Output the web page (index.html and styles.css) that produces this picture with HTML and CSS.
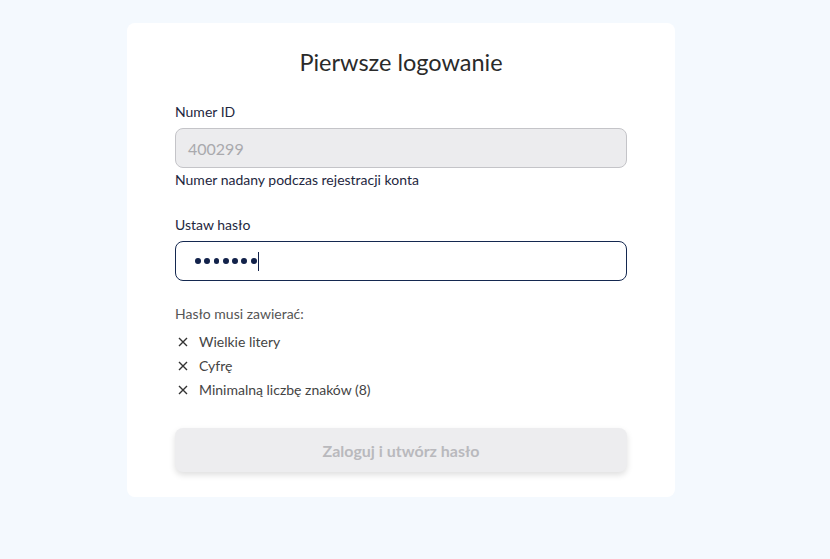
FILE: index.html
```html
<!DOCTYPE html>
<html lang="pl">
<head>
<meta charset="utf-8">
<title>Pierwsze logowanie</title>
<link rel="stylesheet" href="styles.css">
</head>
<body>
<main class="card">
  <h1 class="title">Pierwsze logowanie</h1>
  <div class="field">
    <label class="label">Numer ID</label>
    <div class="input input-disabled">400299</div>
    <div class="hint">Numer nadany podczas rejestracji konta</div>
  </div>
  <div class="field field-pass">
    <label class="label">Ustaw hasło</label>
    <div class="input input-active">
      <span class="dots"><i></i><i></i><i></i><i></i><i></i><i></i><i></i></span><span class="caret"></span>
    </div>
  </div>
  <div class="rules">
    <div class="rules-head">Hasło musi zawierać:</div>
    <ul class="rule-list">
      <li class="rule"><svg class="x" viewBox="0 0 10 10" width="10" height="10"><path d="M1 1L9 9M9 1L1 9" stroke="#333" stroke-width="1.4" fill="none"/></svg>Wielkie litery</li>
      <li class="rule"><svg class="x" viewBox="0 0 10 10" width="10" height="10"><path d="M1 1L9 9M9 1L1 9" stroke="#333" stroke-width="1.4" fill="none"/></svg>Cyfrę</li>
      <li class="rule"><svg class="x" viewBox="0 0 10 10" width="10" height="10"><path d="M1 1L9 9M9 1L1 9" stroke="#333" stroke-width="1.4" fill="none"/></svg>Minimalną liczbę znaków (8)</li>
    </ul>
  </div>
  <button class="btn" disabled>Zaloguj i utwórz hasło</button>
</main>
</body>
</html>
```
FILE: styles.css
```css
html, body {
  margin: 0;
  padding: 0;
}
body {
  background: #f4f9fe;
  font-family: Lato, "Open Sans", sans-serif;
  height: 559px;
  overflow: hidden;
}
.card {
  box-sizing: border-box;
  width: 548px;
  margin: 23px 0 0 127px;
  background: #ffffff;
  border-radius: 8px;
  padding: 23px 48px 25px;
  display: flex;
  flex-direction: column;
}
.title {
  margin: 0 0 24px;
  text-align: center;
  font-size: 23.5px;
  line-height: 32px;
  font-weight: 400;
  color: #2a2a2a;
}
.field {
  display: flex;
  flex-direction: column;
}
.field-pass {
  margin-top: 25px;
}
.label {
  font-size: 14px;
  line-height: 20px;
  color: #1e2740;
  margin-bottom: 6px;
}
.input {
  box-sizing: border-box;
  height: 40px;
  border-radius: 8px;
  font-size: 16px;
  display: flex;
  align-items: center;
  padding: 0 12px;
}
.input-disabled {
  background: #ececee;
  border: 1px solid #c4c4c8;
  color: #a9a9ad;
}
.input-active {
  background: #fff;
  border: 1px solid #142850;
  padding-left: 19px;
}
.dots {
  display: flex;
  gap: 3.5px;
}
.dots i {
  display: block;
  width: 5.8px;
  height: 5.8px;
  border-radius: 50%;
  background: #12224a;
}
.caret {
  width: 1.5px;
  height: 19px;
  background: #12224a;
  margin-left: 1px;
}
.hint {
  margin-top: 2px;
  font-size: 14px;
  line-height: 20px;
  color: #1e2740;
}
.rules {
  margin-top: 23px;
}
.rules-head {
  font-size: 14px;
  line-height: 20px;
  color: #555;
  margin-bottom: 6px;
}
.rule-list {
  list-style: none;
  margin: 0;
  padding: 0;
}
.rule {
  display: flex;
  align-items: center;
  font-size: 14px;
  line-height: 24px;
  color: #444;
}
.x {
  margin: 0 11px 0 3px;
}
.btn {
  margin-top: 26px;
  height: 44px;
  border: none;
  border-radius: 8px;
  background: #ededef;
  color: #b9b9bd;
  font-family: Lato, "Open Sans", sans-serif;
  font-weight: 700;
  font-size: 16px;
  box-shadow: 0 3px 6px rgba(0, 0, 0, 0.13);
}
```
